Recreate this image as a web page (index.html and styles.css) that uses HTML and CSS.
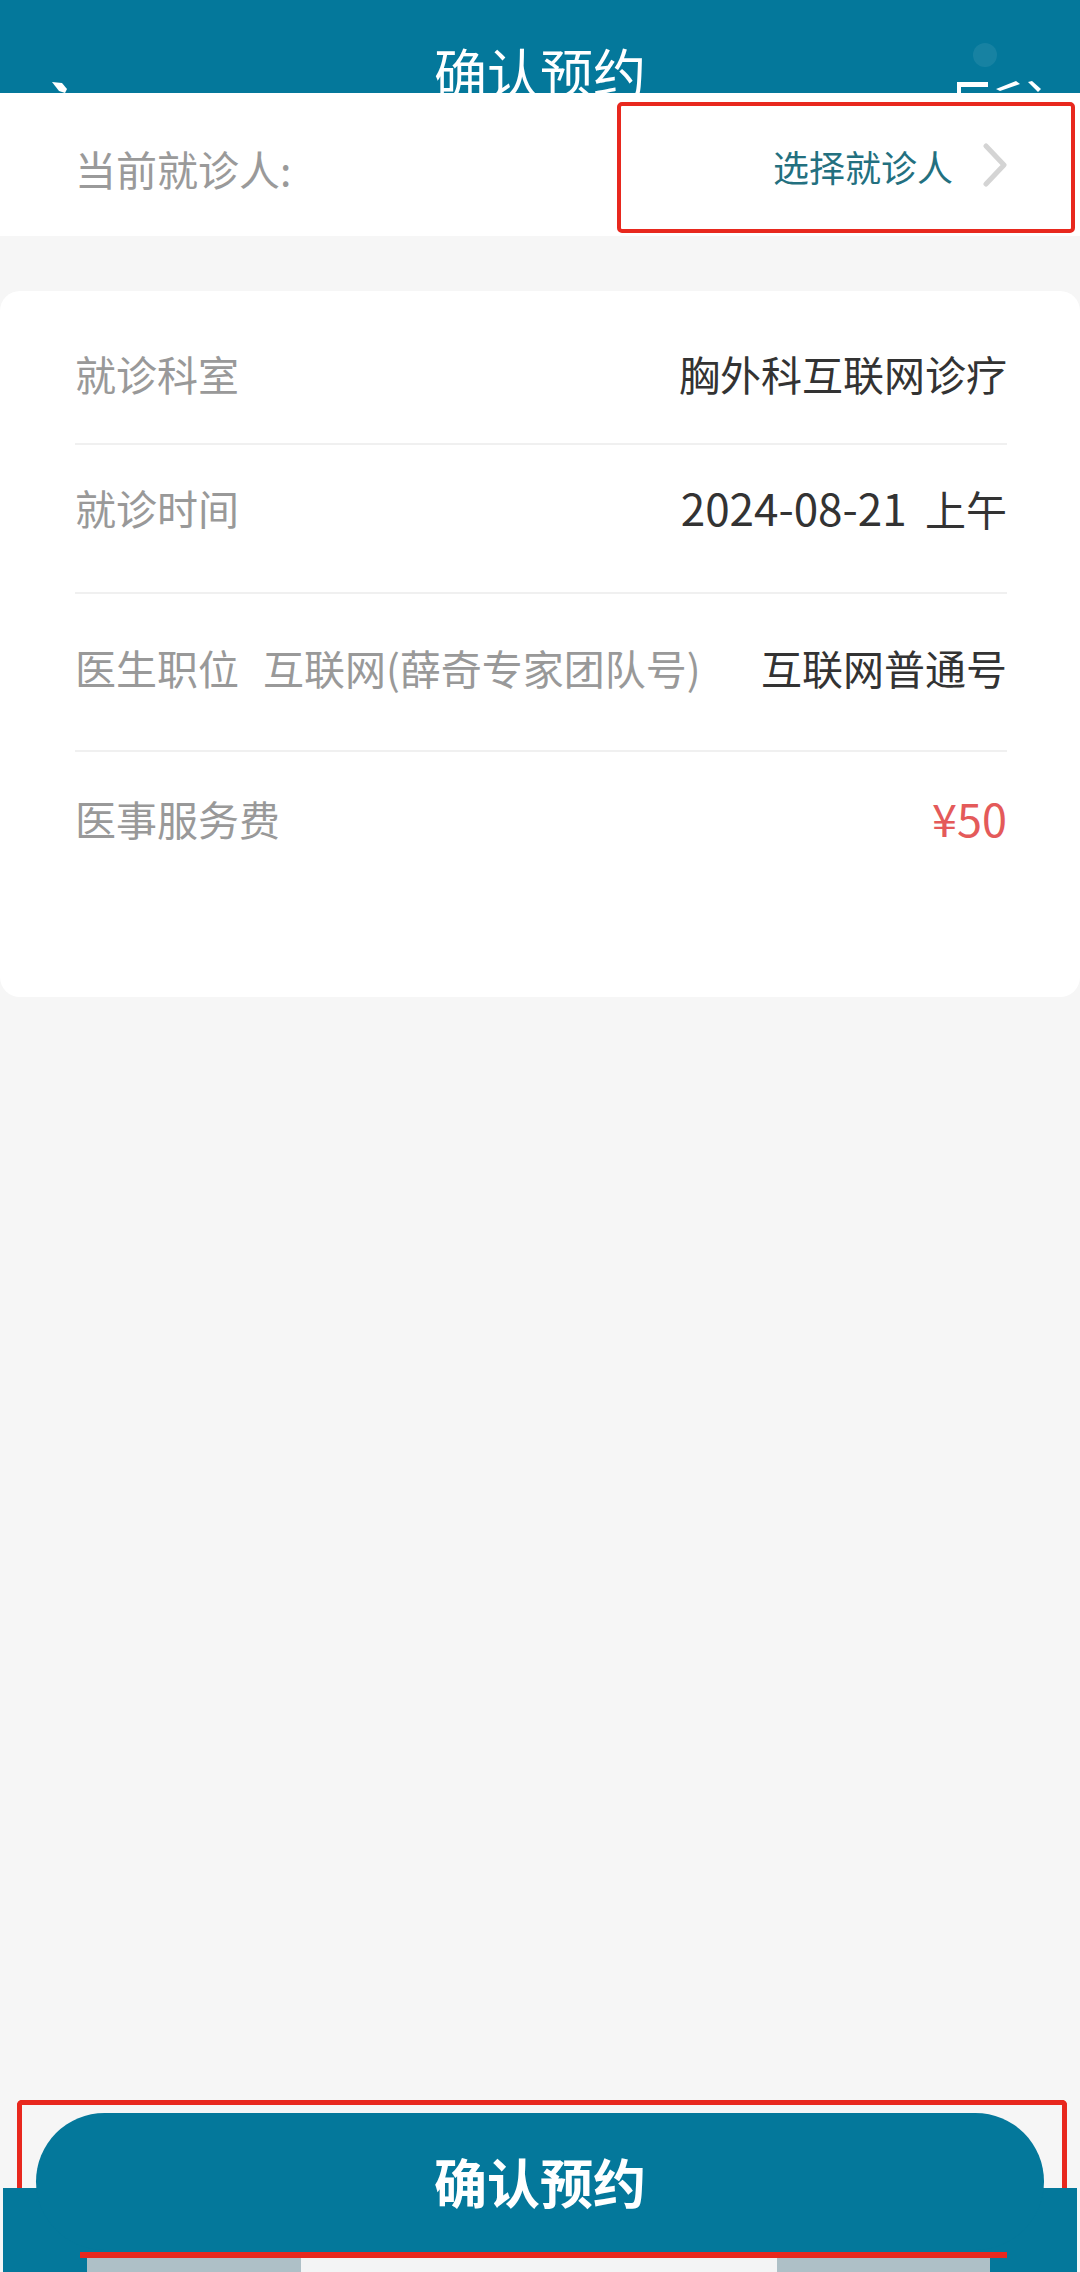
FILE: index.html
```html
<!DOCTYPE html>
<html lang="zh-CN">
<head>
<meta charset="utf-8">
<title>确认预约</title>
<link rel="stylesheet" href="styles.css">
</head>
<body>
<div class="page">
  <header class="topbar">
    <svg class="back-bit" width="24" height="14" viewBox="0 0 24 14"><polygon points="2,2 12,3 17,9 15,13 9,11" fill="#ffffff"/></svg>
    <h1 class="title">确认预约</h1>
    <svg class="menu-bit" width="100" height="56" viewBox="0 0 100 56">
      <circle cx="35" cy="16" r="12" fill="#ffffff" opacity="0.08"/>
      <rect x="7" y="43" width="31" height="5" fill="#ffffff"/>
      <rect x="7" y="43" width="4" height="11" fill="#ffffff"/>
      <polygon points="46,50 66,42 70,45 50,52" fill="#ffffff"/>
      <polygon points="78,43 82,42 91,50 88,53" fill="#ffffff"/>
    </svg>
  </header>

  <section class="patient">
    <span class="patient-label">当前就诊人:</span>
    <span class="patient-pick">选择就诊人<svg class="chevron" width="26" height="44" viewBox="0 0 26 44"><polyline points="4,3 22,22 4,41" fill="none" stroke="#d4d4d4" stroke-width="5" stroke-linecap="round" stroke-linejoin="round"/></svg></span>
  </section>

  <section class="card">
    <div class="row row-dept">
      <span class="label">就诊科室</span>
      <span class="value">胸外科互联网诊疗</span>
    </div>
    <div class="row row-time">
      <span class="label">就诊时间</span>
      <span class="value"><span class="num">2024-08-21</span>&nbsp;&nbsp;上午</span>
    </div>
    <div class="row row-doctor">
      <span class="label">医生职位</span>
      <span class="sub">互联网(薛奇专家团队号)</span>
      <span class="value">互联网普通号</span>
    </div>
    <div class="row row-fee">
      <span class="label">医事服务费</span>
      <span class="value price">¥50</span>
    </div>
  </section>

  <div class="mark mark-patient"></div>

  <footer class="footer">
    <div class="footer-frame"></div>
    <div class="footer-bar"></div>
    <div class="footer-line"></div>
    <div class="footer-strip"></div>
    <button class="confirm-btn">确认预约</button>
  </footer>
</div>
</body>
</html>
```

FILE: styles.css
```css
* {
  box-sizing: border-box;
}

html, body {
  margin: 0;
  padding: 0;
}

body {
  background: #f6f6f6;
  font-family: "Noto Sans CJK SC", "Noto Sans", sans-serif;
}

.page {
  position: relative;
  width: 1080px;
  height: 2272px;
  overflow: hidden;
  background: #f6f6f6;
}

/* ---------- top bar ---------- */
.topbar {
  position: relative;
  height: 93px;
  background: #04789b;
  overflow: hidden;
  display: flex;
  justify-content: center;
}

.title {
  margin: 0;
  padding-top: 45px;
  font-size: 53px;
  font-weight: 400;
  line-height: 1;
  color: #ffffff;
}

.back-bit {
  position: absolute;
  left: 50px;
  top: 80px;
}

.menu-bit {
  position: absolute;
  left: 950px;
  top: 39px;
}

/* ---------- patient row ---------- */
.patient {
  height: 143px;
  background: #ffffff;
  display: flex;
  align-items: center;
  justify-content: space-between;
  padding: 6px 72px 0 75px;
}

.patient-label {
  font-size: 41px;
  color: #9a9a9a;
  line-height: 48px;
}

.patient-pick {
  display: flex;
  align-items: center;
  font-size: 36px;
  line-height: 48px;
  color: #23707f;
  margin-top: -4px;
}

.chevron {
  margin-left: 29px;
  margin-top: -2px;
}

/* ---------- info card ---------- */
.card {
  margin-top: 55px;
  height: 706px;
  background: #ffffff;
  border-radius: 20px;
  padding: 0 73px 0 75px;
  display: flex;
  flex-direction: column;
}

.row {
  display: flex;
  align-items: flex-start;
  border-bottom: 2px solid #f0f0f0;
  font-size: 41px;
  line-height: 48px;
}

.row-dept {
  height: 154px;
  padding-top: 58px;
}

.row-time {
  height: 149px;
  padding-top: 38px;
}

.row-doctor {
  height: 158px;
  padding-top: 49px;
}

.row-fee {
  flex: 1;
  padding-top: 42px;
  border-bottom: none;
}

.label {
  color: #999999;
}

.sub {
  margin-left: 24px;
  font-size: 41px;
  color: #999999;
}

.value {
  margin-left: auto;
  color: #333333;
}

.num {
  font-size: 44px;
}

.price {
  font-size: 45px;
  color: #e45a5a;
}

/* ---------- annotation ---------- */
.mark {
  position: absolute;
  border: 4px solid #e8281e;
  border-radius: 5px;
}

.mark-patient {
  left: 617px;
  top: 102px;
  width: 458px;
  height: 131px;
}

/* ---------- footer ---------- */
.footer {
  position: absolute;
  left: 0;
  right: 0;
  bottom: 0;
  height: 172px;
}

.footer-frame {
  position: absolute;
  left: 17px;
  top: 0;
  width: 1050px;
  height: 88px;
  border: 5px solid #e8281e;
  border-bottom: none;
  border-radius: 5px 5px 0 0;
}

.footer-bar {
  position: absolute;
  left: 3px;
  right: 3px;
  top: 88px;
  bottom: 0;
  background: #04789b;
}

.footer-line {
  position: absolute;
  left: 80px;
  width: 927px;
  top: 152px;
  height: 6px;
  background: #e8281e;
}

.footer-strip {
  position: absolute;
  left: 87px;
  width: 903px;
  top: 158px;
  bottom: 0;
  background: linear-gradient(to right, #aec0c7 0, #aec0c7 214px, #f3f4f5 214px, #f3f4f5 690px, #aec0c7 690px, #aec0c7 100%);
}

.confirm-btn {
  position: absolute;
  left: 36px;
  top: 13px;
  width: 1008px;
  height: 137px;
  border: none;
  border-radius: 69px;
  background: #04789b;
  color: #ffffff;
  font-family: "Noto Sans CJK SC", "Noto Sans", sans-serif;
  font-size: 53px;
  font-weight: 700;
  line-height: 1;
  padding: 0;
}
```
